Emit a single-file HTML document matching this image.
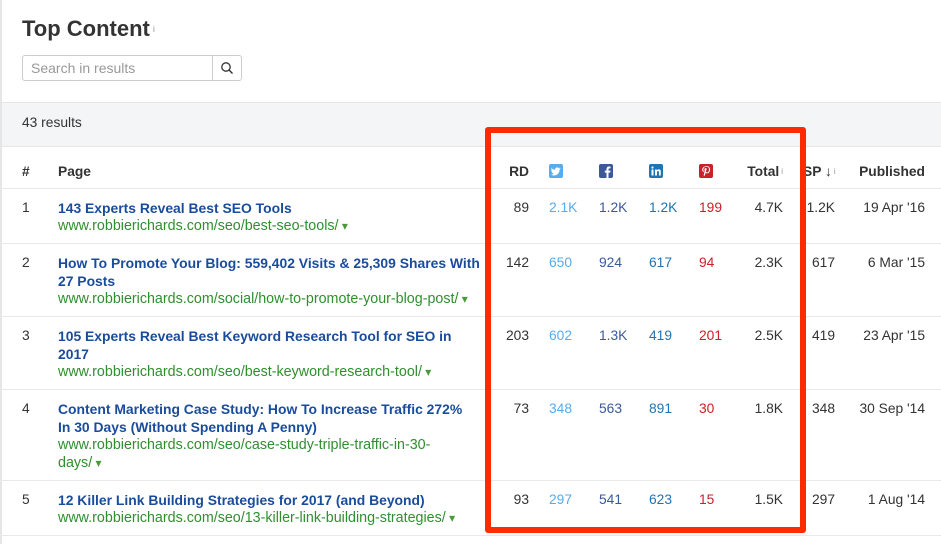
<!DOCTYPE html>
<html><head><meta charset="utf-8"><style>
*{margin:0;padding:0;box-sizing:border-box}
body{width:941px;height:544px;overflow:hidden;background:#fff;font-family:"Liberation Sans",sans-serif;font-size:13.8px;color:#333;position:relative}
.a{position:absolute;white-space:nowrap;line-height:18px}
.r{text-align:right}
.h{font-weight:bold;color:#333}
.t{font-weight:bold;color:#1a4c9c;font-size:13.9px}
.u{color:#2f8f2f;font-size:14.3px}
.u:after{content:" ▾";color:#4a9a3a;font-size:12px}
.ln{position:absolute;left:0;width:941px;height:1px;background:#e8e8e8}
.tw{color:#55acee}.fb{color:#3b5998}.li{color:#1f74b3}.pi{color:#cb2027}
.ic{position:absolute;top:164px;width:14px;height:14px;border-radius:2px}
</style></head><body>
<div style="position:absolute;left:0;top:0;width:2px;height:544px;background:#e6e6e6"></div>
<div class="a" style="left:22px;top:16px;font-size:22px;line-height:26px;font-weight:bold;color:#333">Top Content<sup style="font-size:9px;font-weight:normal;color:#999;vertical-align:top;margin-left:3px">i</sup></div>
<div style="position:absolute;left:22px;top:55px;width:220px;height:26px;border:1px solid #ccc;border-radius:3px"></div>
<div style="position:absolute;left:212px;top:56px;width:1px;height:24px;background:#ccc"></div>
<div class="a" style="left:31px;top:59px;color:#999;font-size:14px">Search in results</div>
<svg style="position:absolute;left:220px;top:61px" width="14" height="14" viewBox="0 0 14 14"><circle cx="6" cy="6" r="4.2" fill="none" stroke="#333" stroke-width="1.3"/><line x1="9" y1="9" x2="12.5" y2="12.5" stroke="#333" stroke-width="1.4"/></svg>
<div style="position:absolute;left:2px;top:102px;width:939px;height:45px;background:#f4f5f7;border-top:1px solid #e6e6e6;border-bottom:1px solid #e6e6e6"></div>
<div class="a" style="left:22px;top:114px">43 results</div>

<div class="a h" style="left:22px;top:163px">#</div>
<div class="a h" style="left:58px;top:163px">Page</div>
<div class="a h r" style="right:412px;top:163px">RD</div>
<div class="ic" style="left:549px;background:#55acee"><svg width="14" height="14" viewBox="0 0 14 14"><path d="M11 4.3c-.4.2-.8.3-1.1.3.4-.3.7-.6.9-1.1-.4.2-.8.4-1.3.5a2 2 0 0 0-3.4 1.8C4.5 5.7 3.3 5 2.5 4c-.5.9-.2 2 .6 2.6-.3 0-.6-.1-.9-.2 0 1 .7 1.8 1.6 2-.3.1-.6.1-.9 0 .3.8 1 1.3 1.9 1.4-.8.6-1.9 1-3 .8.9.6 2 .9 3.1.9 3.7 0 5.8-3.1 5.7-5.9.4-.3.7-.7 1-1.1z" fill="#fff"/></svg></div>
<div class="ic" style="left:599px;background:#3b5998"><svg width="14" height="14" viewBox="0 0 14 14"><path d="M9.5 14V8.6h1.7l.3-2H9.5V5.4c0-.6.2-1 1-1h1V2.6c-.2 0-.8-.1-1.5-.1-1.5 0-2.5.9-2.5 2.6v1.5H5.8v2h1.7V14z" fill="#fff"/></svg></div>
<div class="ic" style="left:649px;background:#1f74b3"><svg width="14" height="14" viewBox="0 0 14 14"><rect x="2.5" y="5.5" width="2" height="6" fill="#fff"/><circle cx="3.5" cy="3.5" r="1.1" fill="#fff"/><path d="M6 5.5h1.9v.9c.3-.6 1-1 1.9-1 1.7 0 2 1 2 2.5v3.6H9.9V8.3c0-.8-.1-1.3-.8-1.3-.8 0-1.1.5-1.1 1.3v3.2H6z" fill="#fff"/></svg></div>
<div class="ic" style="left:699px;background:#cb2027"><svg width="14" height="14" viewBox="0 0 14 14"><path d="M7.2 2.3C4.5 2.3 3.2 4.2 3.2 5.8c0 1 .4 1.8 1.2 2.1.1.1.3 0 .3-.1l.1-.5c0-.1 0-.2-.1-.3-.2-.3-.4-.7-.4-1.2 0-1.6 1.2-3 3.1-3 1.7 0 2.6 1 2.6 2.4 0 1.8-.8 3.3-2 3.3-.6 0-1.1-.5-1-1.2.2-.8.6-1.7.6-2.3 0-.5-.3-1-.9-1-.7 0-1.2.7-1.2 1.7 0 .6.2 1 .2 1l-.8 3.4c-.2 1 0 2.2 0 2.3h.1c.1-.1.9-1.1 1.2-2.1l.4-1.6c.2.4.8.7 1.4.7 1.9 0 3.1-1.7 3.1-4 0-1.8-1.5-3.4-3.8-3.4z" fill="#fff"/></svg></div>
<div class="a h r" style="right:158px;top:163px">Total<sup style="font-size:8px;font-weight:normal;color:#999;vertical-align:top;margin-left:2px">i</sup></div>
<div class="a h" style="left:803px;top:163px">SP ↓<sup style="font-size:8px;font-weight:normal;color:#999;vertical-align:top;margin-left:2px">i</sup></div>
<div class="a h r" style="right:16px;top:163px">Published</div>
<div class="ln" style="top:188px"></div>

<div class="a" style="left:22px;top:199px">1</div>
<div class="a t" style="left:58px;top:199px">143 Experts Reveal Best SEO Tools</div>
<div class="a u" style="left:58px;top:217px">www.robbierichards.com/seo/best-seo-tools/</div>
<div class="a r" style="right:412px;top:199px">89</div>
<div class="a tw" style="left:549px;top:199px">2.1K</div>
<div class="a fb" style="left:599px;top:199px">1.2K</div>
<div class="a li" style="left:649px;top:199px">1.2K</div>
<div class="a pi" style="left:699px;top:199px">199</div>
<div class="a r" style="right:158px;top:199px">4.7K</div>
<div class="a r" style="right:106px;top:199px">1.2K</div>
<div class="a r" style="right:16px;top:199px">19 Apr '16</div>
<div class="ln" style="top:243px"></div>

<div class="a" style="left:22px;top:254px">2</div>
<div class="a t" style="left:58px;top:254px">How To Promote Your Blog: 559,402 Visits &amp; 25,309 Shares With<br>27 Posts</div>
<div class="a u" style="left:58px;top:290px">www.robbierichards.com/social/how-to-promote-your-blog-post/</div>
<div class="a r" style="right:412px;top:254px">142</div>
<div class="a tw" style="left:549px;top:254px">650</div>
<div class="a fb" style="left:599px;top:254px">924</div>
<div class="a li" style="left:649px;top:254px">617</div>
<div class="a pi" style="left:699px;top:254px">94</div>
<div class="a r" style="right:158px;top:254px">2.3K</div>
<div class="a r" style="right:106px;top:254px">617</div>
<div class="a r" style="right:16px;top:254px">6 Mar '15</div>
<div class="ln" style="top:316px"></div>

<div class="a" style="left:22px;top:327px">3</div>
<div class="a t" style="left:58px;top:327px">105 Experts Reveal Best Keyword Research Tool for SEO in<br>2017</div>
<div class="a u" style="left:58px;top:363px">www.robbierichards.com/seo/best-keyword-research-tool/</div>
<div class="a r" style="right:412px;top:327px">203</div>
<div class="a tw" style="left:549px;top:327px">602</div>
<div class="a fb" style="left:599px;top:327px">1.3K</div>
<div class="a li" style="left:649px;top:327px">419</div>
<div class="a pi" style="left:699px;top:327px">201</div>
<div class="a r" style="right:158px;top:327px">2.5K</div>
<div class="a r" style="right:106px;top:327px">419</div>
<div class="a r" style="right:16px;top:327px">23 Apr '15</div>
<div class="ln" style="top:389px"></div>

<div class="a" style="left:22px;top:400px">4</div>
<div class="a t" style="left:58px;top:400px">Content Marketing Case Study: How To Increase Traffic 272%<br>In 30 Days (Without Spending A Penny)</div>
<div class="a u" style="left:58px;top:436px">www.robbierichards.com/seo/case-study-triple-traffic-in-30-<br>days/</div>
<div class="a r" style="right:412px;top:400px">73</div>
<div class="a tw" style="left:549px;top:400px">348</div>
<div class="a fb" style="left:599px;top:400px">563</div>
<div class="a li" style="left:649px;top:400px">891</div>
<div class="a pi" style="left:699px;top:400px">30</div>
<div class="a r" style="right:158px;top:400px">1.8K</div>
<div class="a r" style="right:106px;top:400px">348</div>
<div class="a r" style="right:16px;top:400px">30 Sep '14</div>
<div class="ln" style="top:480px"></div>

<div class="a" style="left:22px;top:491px">5</div>
<div class="a t" style="left:58px;top:491px">12 Killer Link Building Strategies for 2017 (and Beyond)</div>
<div class="a u" style="left:58px;top:509px">www.robbierichards.com/seo/13-killer-link-building-strategies/</div>
<div class="a r" style="right:412px;top:491px">93</div>
<div class="a tw" style="left:549px;top:491px">297</div>
<div class="a fb" style="left:599px;top:491px">541</div>
<div class="a li" style="left:649px;top:491px">623</div>
<div class="a pi" style="left:699px;top:491px">15</div>
<div class="a r" style="right:158px;top:491px">1.5K</div>
<div class="a r" style="right:106px;top:491px">297</div>
<div class="a r" style="right:16px;top:491px">1 Aug '14</div>
<div class="ln" style="top:535px"></div>

<div style="position:absolute;left:485px;top:127px;width:321px;height:406px;border:6px solid #ff2a00;border-radius:3px"></div>
</body></html>
